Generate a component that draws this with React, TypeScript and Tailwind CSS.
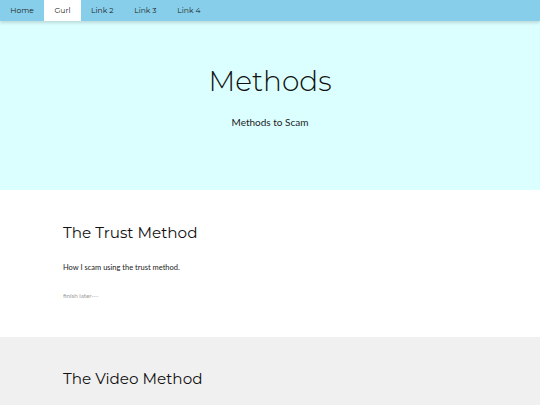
import React from "react";

export default function App() {
  const links = ["Home", "Gurl", "Link 2", "Link 3", "Link 4"];
  return (
    <div className="w-[540px] min-h-[405px] bg-white overflow-hidden">
      <nav className="relative z-10 flex h-[21px] bg-[#87ceeb] shadow-[0_2px_3px_rgba(0,0,0,0.15)] font-['Montserrat',Inter,sans-serif]">
        {links.map((l) => (
          <div
            key={l}
            className={`flex items-center px-[10.3px] text-[7.6px] text-[#222] ${l === "Gurl" ? "bg-white" : ""}`}
          >
            {l}
          </div>
        ))}
      </nav>
      <header className="flex h-[169px] flex-col items-center bg-[#dbffff] pt-[46px]">
        <h1 className="text-[28px] font-light leading-none text-[#111] font-['Montserrat',Inter,sans-serif]">Methods</h1>
        <p className="mt-[20px] text-[10px] text-[#222] font-['Lato','Open_Sans',sans-serif]">Methods to Scam</p>
      </header>
      <section className="h-[147px] bg-white px-[63px] pt-[35px]">
        <h2 className="text-[15.2px] font-normal leading-none text-[#111] font-['Montserrat',Inter,sans-serif]">The Trust Method</h2>
        <p className="mt-[22px] text-[7.5px] text-[#222] font-['Lato','Open_Sans',sans-serif]">How I scam using the trust method.</p>
        <p className="mt-[18px] text-[6.2px] text-[#999] font-['Lato','Open_Sans',sans-serif]">finish later---</p>
      </section>
      <section className="h-[68px] bg-[#f0f0f0] px-[63px] pt-[34px]">
        <h2 className="text-[15.2px] font-normal leading-none text-[#111] font-['Montserrat',Inter,sans-serif]">The Video Method</h2>
      </section>
    </div>
  );
}
